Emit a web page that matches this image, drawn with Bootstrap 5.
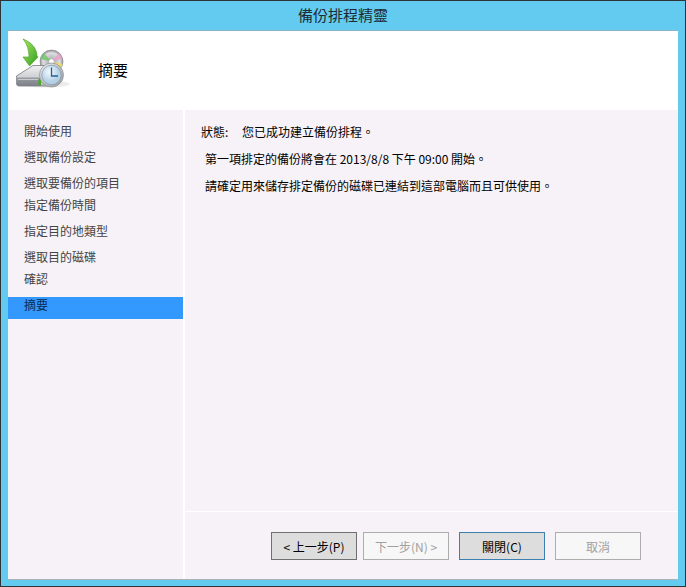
<!DOCTYPE html>
<html lang="zh-Hant">
<head>
<meta charset="utf-8">
<title>備份排程精靈</title>
<link href="https://cdn.jsdelivr.net/npm/bootstrap@5.3.0/dist/css/bootstrap.min.css" rel="stylesheet">
<style>
html,body{margin:0;height:587px;overflow:hidden;background:#63cbf0}
body{font-family:"Noto Sans CJK TC","Liberation Sans",sans-serif;font-size:12px;color:#000}
.wiz-frame{height:587px;border:1px solid #2f3438;background:#63cbf0}
.wiz-title{height:29px;font-size:15px;line-height:28px;color:#1c2a33}
.wiz-body{margin:0 7px 6px;border-top:1px solid #8fb4c8;border-bottom:1px solid #a9b4ba;background:#fff;min-height:0}
.wiz-head{height:79px;padding-left:8px}
.wiz-icon{width:60px;height:60px;margin-top:-5px}
.wiz-heading{font-size:15px;margin:0 0 2px 22px;line-height:20px}
.wiz-nav{width:175px;background:#f6f2f7;padding-top:13px;color:#444}
.wiz-step{height:22px;line-height:16px;padding-left:16px}
.wiz-gap{margin-bottom:4px}
.wiz-current{background:#3399ff;color:#0a2a55}
.wiz-main{margin-left:2px;background:#f6f2f7;min-width:0}
.wiz-content{padding:14px 0 0 16px;line-height:16px}
.wiz-label{width:41px}
.wiz-para{margin:11px 0 0 4px}
.wiz-foot{height:68px;border-top:1px solid #fff;padding:20px 37px 0 86px}
.wiz-btn{width:86px;height:28px;padding:0;font-size:12px;line-height:25px;border-radius:0;border:1px solid #707070;background:#ddd;color:#000}
.wiz-btn:disabled{background:#f7f7f7;border-color:#adadad;color:#a0a0a0;opacity:1}
.wiz-default{border-color:#3c7fb1}
.wiz-sp-s{margin-left:6px}
.wiz-sp-l{margin-left:10px}
</style>
</head>
<body>
<div class="wiz-frame d-flex flex-column">
  <div class="wiz-title text-center">備份排程精靈</div>
  <div class="wiz-body flex-grow-1 d-flex flex-column">
    <div class="wiz-head d-flex align-items-center">
      <svg class="wiz-icon flex-shrink-0" viewBox="0 0 60 60" aria-hidden="true">
        <defs>
          <linearGradient id="g1" x1="0" y1="0" x2="1" y2="1"><stop offset="0" stop-color="#a8e860"/><stop offset="1" stop-color="#2f9e20"/></linearGradient>
          <radialGradient id="c1"><stop offset="0" stop-color="#f5f5f5"/><stop offset=".35" stop-color="#bdbdc2"/><stop offset=".75" stop-color="#dedee2"/><stop offset="1" stop-color="#8e8e92"/></radialGradient>
          <linearGradient id="d1" x1="0" y1="0" x2="0" y2="1"><stop offset="0" stop-color="#f0f1f3"/><stop offset="1" stop-color="#b4b8be"/></linearGradient>
          <linearGradient id="d2" x1="0" y1="0" x2="0" y2="1"><stop offset="0" stop-color="#9a9da4"/><stop offset="1" stop-color="#7c7f86"/></linearGradient>
          <radialGradient id="f1" cx=".4" cy=".35"><stop offset="0" stop-color="#f4f9fc"/><stop offset="1" stop-color="#b4d0e4"/></radialGradient>
          <linearGradient id="r1" x1="0" y1="0" x2="1" y2="1"><stop offset="0" stop-color="#eeeef0"/><stop offset="1" stop-color="#98989e"/></linearGradient>
        </defs>
        <ellipse cx="30" cy="46" rx="24" ry="3.5" fill="#ececec"/>
        <circle cx="35.5" cy="23.5" r="11.5" fill="url(#c1)" stroke="#8a8a8e" stroke-width=".6"/>
        <path d="M35.500 23.500L24.500 21A11.300 11.300 0 0 1 28 15Z" fill="#74c46c" opacity=".85"/>
        <path d="M35.500 23.500L46.500 21A11.300 11.300 0 0 0 43 15Z" fill="#e6a0c8" opacity=".8"/>
        <path d="M35.500 23.500L46.500 26A11.300 11.300 0 0 1 44 31Z" fill="#ece060" opacity=".9"/>
        <circle cx="35.500" cy="23.500" r="2.800" fill="#fff" stroke="#8a8a8e" stroke-width=".6"/>
        <path d="M7 1C15 4 21 10 21 18L22 19L13.500 28L7 19L13 19C13 12 11 6 7 1Z" fill="url(#g1)" stroke="#4a9a28" stroke-width=".6"/>
        <path d="M.5 38L17 27.500L33 27.500L33 48L3 48C1 48 0 46 0 44Z" fill="url(#d1)" stroke="#74787e" stroke-width=".8"/>
        <path d="M.5 39.500L25 39.500L25 48L3 48C1 48 .3 46 .3 44Z" fill="url(#d2)"/>
        <path d="M2 41L24 41L24 42L2 42Z" fill="#c8cbd0"/>
        <rect x="22.500" y="41" width="2.500" height="6" fill="#3fb018"/>
        <circle cx="35.500" cy="37" r="12" fill="url(#r1)" stroke="#85858a" stroke-width=".6"/>
        <circle cx="35.500" cy="37" r="9.700" fill="url(#f1)" stroke="#6f8ea8" stroke-width=".6"/>
        <path d="M35.500 29.500V38H42" fill="none" stroke="#2a5f90" stroke-width="1.300"/>
      </svg>
      <div class="wiz-heading">摘要</div>
    </div>
    <div class="d-flex flex-grow-1" style="min-height:0">
      <nav class="wiz-nav flex-shrink-0">
        <div class="wiz-step wiz-gap">開始使用</div>
        <div class="wiz-step wiz-gap">選取備份設定</div>
        <div class="wiz-step">選取要備份的項目</div>
        <div class="wiz-step wiz-gap">指定備份時間</div>
        <div class="wiz-step wiz-gap">指定目的地類型</div>
        <div class="wiz-step">選取目的磁碟</div>
        <div class="wiz-step wiz-gap">確認</div>
        <div class="wiz-step wiz-current">摘要</div>
      </nav>
      <main class="wiz-main flex-grow-1 d-flex flex-column">
        <div class="wiz-content flex-grow-1">
          <div class="d-flex"><span class="wiz-label">狀態:</span><span>您已成功建立備份排程。</span></div>
          <p class="wiz-para">第一項排定的備份將會在 2013/8/8 下午 09:00 開始。</p>
          <p class="wiz-para">請確定用來儲存排定備份的磁碟已連結到這部電腦而且可供使用。</p>
        </div>
        <div class="wiz-foot d-flex align-items-start">
          <button type="button" class="btn wiz-btn">&lt; 上一步(P)</button>
          <button type="button" class="btn wiz-btn wiz-sp-s" disabled>下一步(N) &gt;</button>
          <button type="button" class="btn wiz-btn wiz-default wiz-sp-l">關閉(C)</button>
          <button type="button" class="btn wiz-btn wiz-sp-l" disabled>取消</button>
        </div>
      </main>
    </div>
  </div>
</div>
<script src="https://cdn.jsdelivr.net/npm/bootstrap@5.3.0/dist/js/bootstrap.bundle.min.js"></script>
</body>
</html>
